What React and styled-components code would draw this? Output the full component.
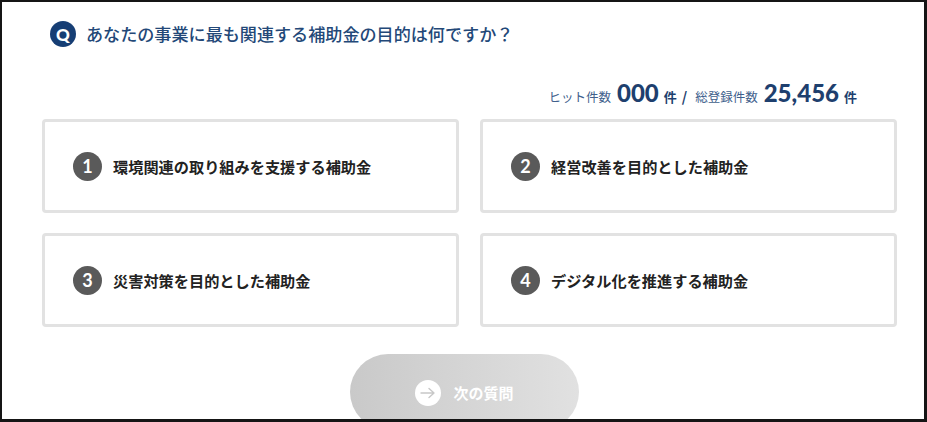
import React from 'react';
import styled, { createGlobalStyle } from 'styled-components';

const GlobalStyle = createGlobalStyle`
  html, body {
    margin: 0;
    padding: 0;
    background: #ffffff;
  }
  body {
    font-family: "Noto Sans CJK JP", "Noto Sans", sans-serif;
  }
`;

const Frame = styled.div`
  width: 927px;
  height: 422px;
  box-sizing: border-box;
  border-style: solid;
  border-color: #151515;
  border-width: 2px 3px 3px 2px;
  overflow: hidden;
  background: #fff;
  padding: 19px 27px 0 40px;
`;

const QuestionRow = styled.div`
  display: flex;
  align-items: center;
  gap: 10px;
  padding-left: 8px;
  height: 26px;
`;

const QBadge = styled.span`
  width: 26px;
  height: 26px;
  border-radius: 50%;
  background: #163e74;
  color: #fff;
  font-family: "Lato", "Noto Sans", sans-serif;
  font-weight: 900;
  font-size: 17px;
  display: flex;
  align-items: center;
  justify-content: center;
  flex-shrink: 0;
`;

const QuestionText = styled.h2`
  margin: 0;
  font-size: 17.1px;
  font-weight: 500;
  color: #234878;
  line-height: 1;
`;

const CountRow = styled.div`
  display: flex;
  justify-content: flex-end;
  align-items: baseline;
  padding-right: 40px;
  margin-top: 31px;
  color: #2a4a78;
  height: 28px;
`;

const CountLabel = styled.span`
  font-size: 12.5px;
  font-weight: 400;
  color: #40608c;
  margin-right: 6px;
`;

const CountNumber = styled.span`
  font-family: "Lato", "Noto Sans", sans-serif;
  font-size: 24px;
  font-weight: 900;
  color: #1e3f6e;
  margin-right: 5px;
`;

const CountUnit = styled.span`
  font-size: 13px;
  font-weight: 700;
  color: #1e3f6e;
  margin-right: ${(p) => p.$gap || 0}px;
`;

const Slash = styled.span`
  font-size: 14px;
  font-weight: 700;
  color: #1e3f6e;
  margin-right: 8px;
`;

const Grid = styled.div`
  display: grid;
  grid-template-columns: 417px 417px;
  column-gap: 21px;
  row-gap: 20px;
  margin-top: 13px;
`;

const Card = styled.button`
  height: 94px;
  box-sizing: border-box;
  border: 3px solid #e2e2e2;
  border-radius: 4px;
  background: #fff;
  display: flex;
  align-items: center;
  gap: 11px;
  padding: 0 0 0 28px;
  cursor: pointer;
  font-family: inherit;
  text-align: left;
`;

const NumBadge = styled.span`
  width: 29px;
  height: 29px;
  border-radius: 50%;
  background: #5a5a5a;
  color: #fff;
  font-family: "Lato", "Noto Sans", sans-serif;
  font-weight: 700;
  font-size: 18px;
  display: flex;
  align-items: center;
  justify-content: center;
  flex-shrink: 0;
`;

const CardText = styled.span`
  font-size: 15.2px;
  font-weight: 700;
  color: #222;
`;

const ButtonRow = styled.div`
  display: flex;
  justify-content: center;
  margin-top: 27px;
  padding-right: 10px;
`;

const NextButton = styled.button`
  width: 229px;
  height: 76px;
  border: none;
  border-radius: 38px;
  background: linear-gradient(90deg, #c9c9c9 0%, #e1e1e1 100%);
  display: flex;
  align-items: flex-start;
  justify-content: center;
  padding-top: 26px;
  gap: 12px;
  box-sizing: border-box;
  font-family: inherit;
  cursor: default;
`;

const ArrowCircle = styled.span`
  width: 26px;
  height: 26px;
  border-radius: 50%;
  background: #fff;
  display: flex;
  align-items: center;
  justify-content: center;
`;

const NextLabel = styled.span`
  color: #fff;
  font-size: 15px;
  font-weight: 700;
  line-height: 26px;
`;

const options = [
  '環境関連の取り組みを支援する補助金',
  '経営改善を目的とした補助金',
  '災害対策を目的とした補助金',
  'デジタル化を推進する補助金',
];

export default function App() {
  return (
    <>
      <GlobalStyle />
      <Frame>
        <QuestionRow>
          <QBadge>Q</QBadge>
          <QuestionText>あなたの事業に最も関連する補助金の目的は何ですか？</QuestionText>
        </QuestionRow>

        <CountRow>
          <CountLabel>ヒット件数</CountLabel>
          <CountNumber>000</CountNumber>
          <CountUnit $gap={5}>件</CountUnit>
          <Slash>/</Slash>
          <CountLabel>総登録件数</CountLabel>
          <CountNumber>25,456</CountNumber>
          <CountUnit>件</CountUnit>
        </CountRow>

        <Grid>
          {options.map((text, i) => (
            <Card key={i}>
              <NumBadge>{i + 1}</NumBadge>
              <CardText>{text}</CardText>
            </Card>
          ))}
        </Grid>

        <ButtonRow>
          <NextButton disabled>
            <ArrowCircle>
              <svg width="16" height="12" viewBox="0 0 16 12" fill="none">
                <path d="M1 6h13M9 1.5 14 6l-5 4.5" stroke="#c8c8c8" strokeWidth="1.4" strokeLinecap="round" strokeLinejoin="round" />
              </svg>
            </ArrowCircle>
            <NextLabel>次の質問</NextLabel>
          </NextButton>
        </ButtonRow>
      </Frame>
    </>
  );
}
